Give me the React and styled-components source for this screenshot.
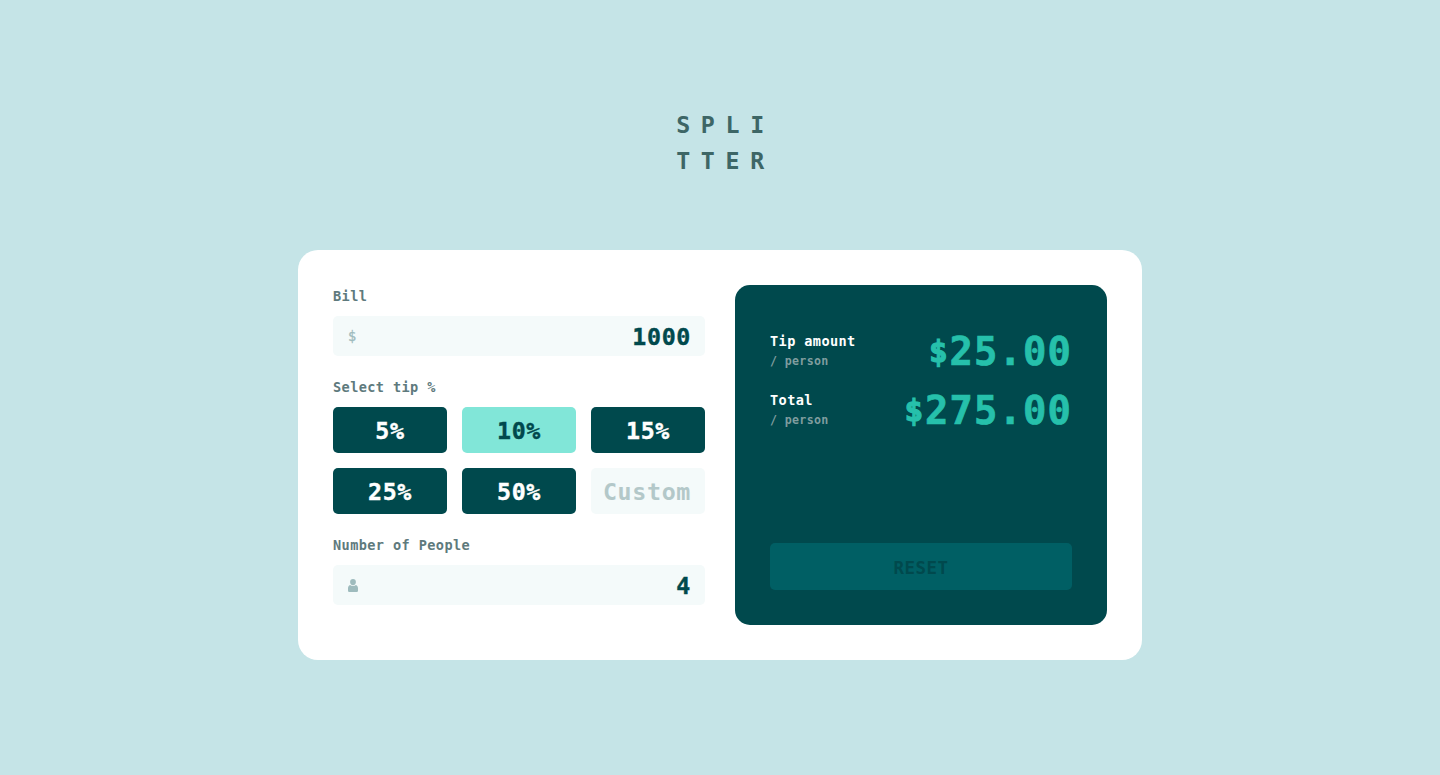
import React, { useState } from "react";
import styled, { createGlobalStyle, css } from "styled-components";

const colors = {
  page: "#c5e4e7",
  dark: "#00494d",
  label: "#5e7a7d",
  field: "#f4fafa",
  muted: "#9ebbbd",
  strong: "#26c0ab",
  active: "#81e6d8",
  button: "#005f64",
};

// Monospaced bold text on a 0.612em character pitch.
const mono = (size) => css`
  font-family: "DejaVu Sans Mono", "Liberation Mono", monospace;
  font-weight: 700;
  font-size: ${size * 0.97}px;
  letter-spacing: ${size * (0.612 - 0.97 * 0.602)}px;
`;

const GlobalStyle = createGlobalStyle`
  *, *::before, *::after { box-sizing: border-box; }
  body { margin: 0; background: ${colors.page}; }
`;

const Page = styled.main`
  min-height: 775px;
  display: flex;
  flex-direction: column;
  align-items: center;
  padding-top: 107px;
`;

const Logo = styled.h1`
  ${mono(24)}
  letter-spacing: 10.67px;
  line-height: 36px;
  color: #3d6666;
  margin: 0 0 71px;
  padding-left: 11px;
`;

const Card = styled.section`
  width: 844px;
  height: 410px;
  padding: 35px;
  border-radius: 20px;
  background: #fff;
  display: grid;
  grid-template-columns: 1fr 1fr;
  gap: 30px;
`;

const Form = styled.div`
  display: flex;
  flex-direction: column;
  gap: 20px;
`;

const Group = styled.div`
  display: flex;
  flex-direction: column;
  gap: 10px;
`;

const Label = styled.label`
  ${mono(14)}
  padding-top: 2px;
  line-height: 19px;
  color: ${colors.label};
`;

const Field = styled.div`
  height: 40px;
  padding: 0 14px 0 15px;
  display: flex;
  align-items: center;
  background: ${colors.field};
  border-radius: 5px;
`;

const Currency = styled.span`
  ${mono(14)}
  font-weight: 400;
  -webkit-text-stroke: 0.3px ${colors.muted};
  line-height: 20px;
  color: ${colors.muted};
`;

const FieldInput = styled.input`
  ${mono(24)}
  -webkit-text-stroke: 0.4px currentColor;
  flex: 1;
  min-width: 0;
  height: 40px;
  padding: 0;
  border: 0;
  outline: 0;
  background: transparent;
  text-align: right;
  color: ${colors.dark};
`;

const Tips = styled.div`
  display: grid;
  grid-template-columns: repeat(3, 1fr);
  grid-auto-rows: 46px;
  gap: 15px;
`;

const TipButton = styled.button`
  ${mono(24)}
  -webkit-text-stroke: 0.4px currentColor;
  border: 0;
  border-radius: 5px;
  padding: 0;
  background: ${(p) => (p.$active ? colors.active : colors.dark)};
  color: ${(p) => (p.$active ? colors.dark : "#fff")};
`;

const CustomTip = styled.input`
  ${mono(24)}
  width: 100%;
  min-width: 0;
  border: 0;
  outline: 0;
  border-radius: 5px;
  padding: 0 14px 0 10px;
  text-align: right;
  background: ${colors.field};
  color: ${colors.dark};
  &::placeholder {
    color: #b3c8c9;
    opacity: 1;
  }
`;

const Summary = styled.div`
  padding: 35px;
  border-radius: 15px;
  background: ${colors.dark};
  display: flex;
  flex-direction: column;
`;

const ResultRow = styled.div`
  height: 59px;
  display: flex;
  align-items: center;
  justify-content: space-between;
`;

const ResultName = styled.div`
  ${mono(14)}
  line-height: 21px;
  padding-top: 2px;
  color: #fff;
`;

const PerPerson = styled.div`
  ${mono(12)}
  line-height: 18px;
  color: #7f9d9f;
`;

const Amount = styled.div`
  ${mono(40)}
  -webkit-text-stroke: 0.7px currentColor;
  display: flex;
  align-items: center;
  line-height: 59px;
  padding-top: 4px;
  color: ${colors.strong};
`;

const DollarSign = styled.span`
  width: 24.5px;
  padding-left: 2px;
  font-size: 31px;
  line-height: 55px;
  letter-spacing: 0;
  text-align: center;
  -webkit-text-stroke: 1.2px currentColor;
`;

const ResetButton = styled.button`
  ${mono(18)}
  margin-top: auto;
  height: 47px;
  padding: 3px 0 0;
  border: 0;
  border-radius: 5px;
  background: ${colors.button};
  color: ${colors.dark};
`;

const PersonIcon = () => (
  <svg width="10" height="13" viewBox="0 0 10 13" fill={colors.muted} aria-hidden="true">
    <ellipse cx="5" cy="3.1" rx="2.9" ry="3.1" />
    <path d="M2.1 6C.7 6.4 0 7.7 0 9.3v2.1C0 12.4.7 13 1.6 13h6.8c.9 0 1.6-.6 1.6-1.6V9.3C10 7.7 9.3 6.4 7.9 6 7.2 6.7 6.2 7 5 7S2.8 6.7 2.1 6Z" />
  </svg>
);

const tips = [5, 10, 15, 25, 50];

const Result = ({ name, value }) => (
  <ResultRow>
    <ResultName>
      {name}
      <PerPerson>/ person</PerPerson>
    </ResultName>
    <Amount>
      <DollarSign>$</DollarSign>
      {value.toFixed(2)}
    </Amount>
  </ResultRow>
);

export default function App() {
  const [bill, setBill] = useState("1000");
  const [people, setPeople] = useState("4");
  const [tip, setTip] = useState(10);
  const [custom, setCustom] = useState("");

  const rate = custom === "" ? tip : Number(custom) || 0;
  const count = Number(people) || 1;
  const total = Number(bill) || 0;
  const tipEach = (total * rate) / 100 / count;

  const reset = () => {
    setBill("");
    setPeople("");
    setCustom("");
    setTip(0);
  };

  return (
    <>
      <GlobalStyle />
      <Page>
        <Logo>
          SPLI
          <br />
          TTER
        </Logo>
        <Card>
          <Form>
            <Group>
              <Label htmlFor="bill">Bill</Label>
              <Field>
                <Currency>$</Currency>
                <FieldInput id="bill" value={bill} onChange={(e) => setBill(e.target.value)} />
              </Field>
            </Group>
            <Group>
              <Label as="span">Select tip %</Label>
              <Tips>
                {tips.map((t) => (
                  <TipButton key={t} $active={t === rate} onClick={() => setTip(t)}>
                    {t}%
                  </TipButton>
                ))}
                <CustomTip
                  placeholder="Custom"
                  value={custom}
                  onChange={(e) => setCustom(e.target.value)}
                />
              </Tips>
            </Group>
            <Group>
              <Label htmlFor="people">Number of People</Label>
              <Field>
                <PersonIcon />
                <FieldInput id="people" value={people} onChange={(e) => setPeople(e.target.value)} />
              </Field>
            </Group>
          </Form>
          <Summary>
            <Result name="Tip amount" value={tipEach} />
            <Result name="Total" value={total / count + tipEach} />
            <ResetButton onClick={reset}>RESET</ResetButton>
          </Summary>
        </Card>
      </Page>
    </>
  );
}
